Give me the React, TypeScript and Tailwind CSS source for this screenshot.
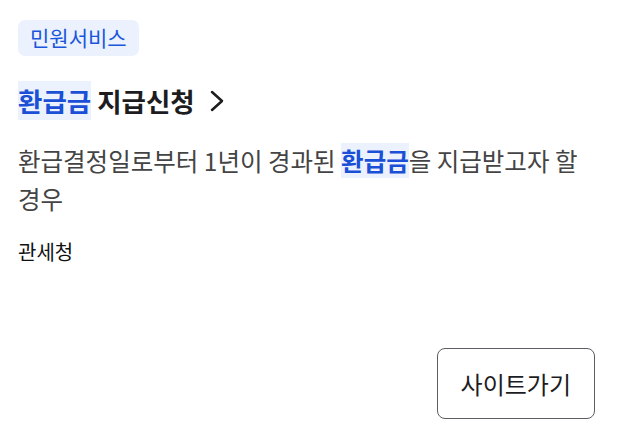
import React from 'react';

const font = { fontFamily: '"Noto Sans CJK KR", "Noto Sans", sans-serif' };

function Highlight({ children }: { children: React.ReactNode }) {
  return <span className="bg-[#ebf2fe] text-[#1a4fd6]">{children}</span>;
}

export default function App() {
  return (
    <div
      className="w-[618px] h-[444px] bg-white flex flex-col pl-[18px] pr-[23px] pt-[20px]"
      style={font}
    >
      <div className="self-start h-[36px] px-[12px] flex items-center rounded-[7px] bg-[#ebf2fe] text-[#1a56db] text-[21px]">
        민원서비스
      </div>

      <a className="mt-[27px] flex items-center text-[26.5px] font-bold text-[#1d1d1f] leading-[36px]">
        <span>
          <Highlight>환급금</Highlight> 지급신청
        </span>
        <svg
          className="ml-[14px] w-[16px] h-[22px]"
          viewBox="0 0 16 22"
          fill="none"
          stroke="#1d1d1f"
          strokeWidth="2.5"
          strokeLinecap="round"
          strokeLinejoin="round"
        >
          <path d="M3 2l10 9-10 9" />
        </svg>
      </a>

      <p className="mt-[23px] text-[24.5px] leading-[38px] text-[#444] break-keep">
        환급결정일로부터 1년이 경과된 <span className="font-bold"><Highlight>환급금</Highlight></span>을 지급받고자 할 경우
      </p>

      <div className="mt-[20px] text-[20px] text-[#111] leading-[28px]">관세청</div>

      <div className="mt-auto mb-[25px] self-end">
        <button className="h-[71px] px-[23px] rounded-[8px] border border-[#5a5e63] text-[24px] text-[#1d1d1f] bg-white">
          사이트가기
        </button>
      </div>
    </div>
  );
}
